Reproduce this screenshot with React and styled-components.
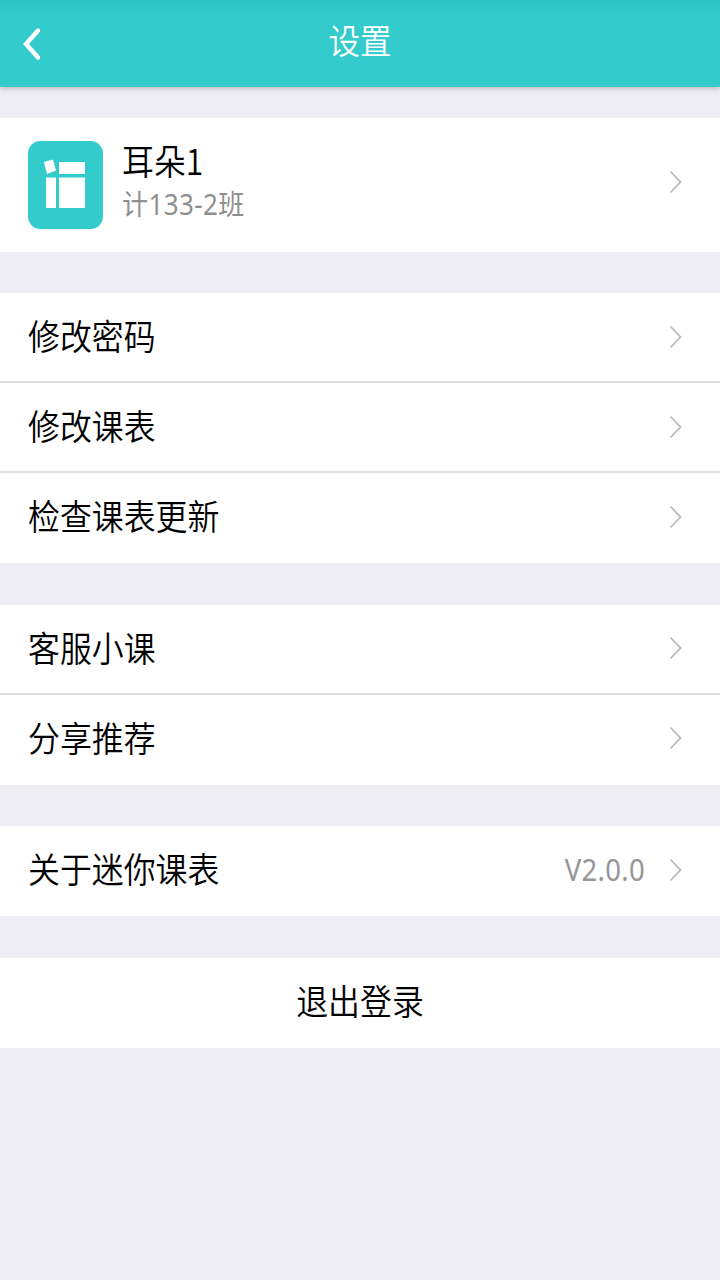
import React from "react";
import styled, { createGlobalStyle } from "styled-components";

const GlobalStyle = createGlobalStyle`
  body {
    margin: 0;
    background-color: #efeef4;
    font-family: "Noto Sans CJK SC", sans-serif;
  }
`;

const Page = styled.div`
  min-height: 1280px;
  background-color: #efeef4;
`;

const Header = styled.header`
  display: grid;
  grid-template-columns: 60px 1fr 60px;
  align-items: center;
  height: 87px;
  background: linear-gradient(#2fc3c3, #33cbcc 14px);
  box-shadow: 0 1px 6px rgba(0, 0, 0, 0.28);
`;

const BackButton = styled.button`
  display: flex;
  padding: 0 0 0 22px;
  border: none;
  background: none;
  cursor: pointer;
`;

const Title = styled.h1`
  margin: 0 0 9px;
  color: #fff;
  font-size: 31.5px;
  font-weight: 350;
  line-height: 44px;
  text-align: center;
  transform: scaleY(1.1);
`;

const Content = styled.main`
  display: flex;
  flex-direction: column;
  gap: 41.6px;
  padding-top: 31px;
`;

const Group = styled.section`
  background-color: #fff;
`;

const Row = styled.div`
  display: flex;
  align-items: center;
  box-sizing: border-box;
  height: 90px;
  padding: 0 38px 1px 28px;
  border-bottom: 2px solid #dedede;
  cursor: pointer;

  &:last-child {
    border-bottom-color: #fff;
  }
`;

const ProfileRow = styled(Row)`
  height: 133.6px;
  padding-bottom: 3px;
`;

const LogoutRow = styled(Row)`
  justify-content: center;
  padding: 0 28px 1px;
`;

const Label = styled.span`
  margin-bottom: 3px;
  color: #000;
  font-size: 31.9px;
  font-weight: 350;
  line-height: 44px;
  white-space: nowrap;
  transform: scaleY(1.1);
`;

const Version = styled.span`
  margin-right: 24px;
  color: #969696;
  font-family: "Noto Sans", sans-serif;
  font-size: 27.5px;
  letter-spacing: 0.3px;
  line-height: 44px;
  transform: scaleY(1.1);
`;

const Spacer = styled.div`
  flex: 1;
`;

const Avatar = styled.svg`
  margin: 5px 19px 0 0;
`;

const Person = styled.div`
  display: flex;
  flex-direction: column;
  margin-bottom: 2px;
`;

const ClassName = styled.span`
  margin-top: -2px;
  color: #8f8f8f;
  font-family: "Noto Sans", "Noto Sans CJK SC", sans-serif;
  font-size: 26px;
  letter-spacing: 0.4px;
  line-height: 42px;
  transform: scaleY(1.1);
`;

const Chevron = () => (
  <svg width="13" height="24" viewBox="0 0 13 24" fill="none">
    <path d="M1.5 1.5L11.5 12L1.5 22.5" stroke="#bababa" strokeWidth="1.8" />
  </svg>
);

const groups = [
  [{ label: "修改密码" }, { label: "修改课表" }, { label: "检查课表更新" }],
  [{ label: "客服小课" }, { label: "分享推荐" }],
  [{ label: "关于迷你课表", version: "V2.0.0" }],
];

const App = () => {
  return (
    <>
      <GlobalStyle />
      <Page>
        <Header>
          <BackButton aria-label="返回">
            <svg width="20" height="34" viewBox="0 0 20 34" fill="none">
              <path
                d="M16 3.5L4 17L16 30.5"
                stroke="#fff"
                strokeWidth="4.4"
                strokeLinecap="round"
              />
            </svg>
          </BackButton>
          <Title>设置</Title>
        </Header>

        <Content>
          <Group>
            <ProfileRow>
              <Avatar width="75" height="88" viewBox="0 0 75 88">
                <rect width="75" height="88" rx="12" ry="13" fill="#33cbcc" />
                <g fill="#fff">
                  <path d="M16 21L25 18.5L28 29.5L19 33Z" />
                  <rect x="31" y="21" width="26" height="12" />
                  <rect x="18" y="36.5" width="10" height="30.5" />
                  <rect x="31" y="36.5" width="26" height="30.5" />
                </g>
              </Avatar>
              <Person>
                <Label>耳朵1</Label>
                <ClassName>计133-2班</ClassName>
              </Person>
              <Spacer />
              <Chevron />
            </ProfileRow>
          </Group>

          {groups.map((rows, index) => (
            <Group key={index}>
              {rows.map((row) => (
                <Row key={row.label}>
                  <Label>{row.label}</Label>
                  <Spacer />
                  {row.version && <Version>{row.version}</Version>}
                  <Chevron />
                </Row>
              ))}
            </Group>
          ))}

          <Group>
            <LogoutRow>
              <Label>退出登录</Label>
            </LogoutRow>
          </Group>
        </Content>
      </Page>
    </>
  );
};

export default App;
